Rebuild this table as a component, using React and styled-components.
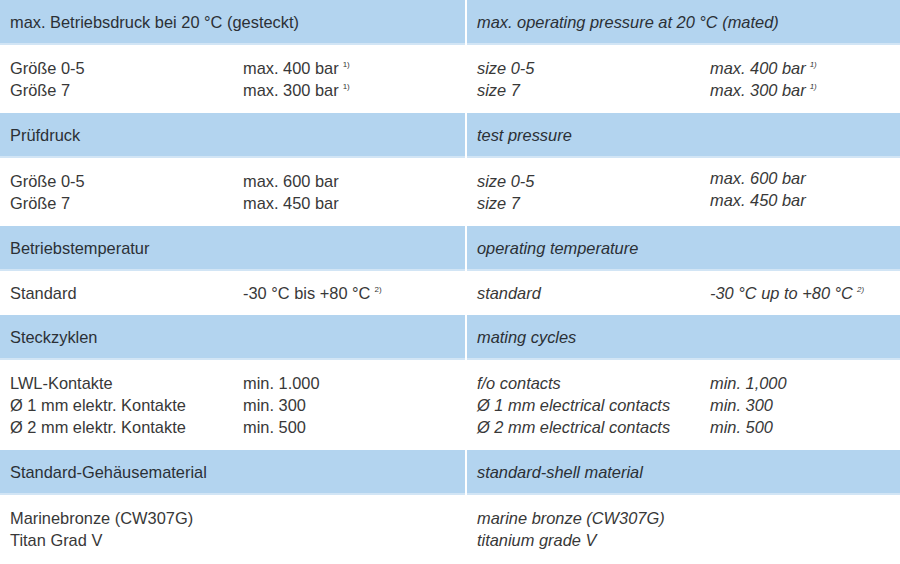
import React from "react";
import styled, { createGlobalStyle } from "styled-components";

const GlobalStyle = createGlobalStyle`
  html, body {
    margin: 0;
    padding: 0;
    background: #ffffff;
  }
  body {
    font-family: "Liberation Sans", Arial, sans-serif;
    font-size: 16.4px;
    color: #3a3a3a;
    overflow: hidden;
  }
`;

const Table = styled.div`
  display: flex;
  flex-direction: column;
  width: 900px;
`;

const Row = styled.div`
  display: grid;
  grid-template-columns: 465px 1fr;
  column-gap: 2px;
  background: #ffffff;
`;

const HeaderCell = styled.div`
  background: #b3d4ef;
  border-bottom: 2px solid #d2e5f5;
  height: 45px;
  box-sizing: border-box;
  padding: 0 10px;
  display: flex;
  align-items: center;
  line-height: 22px;
  color: #2b3036;
  font-style: ${({ $en }) => ($en ? "italic" : "normal")};
`;

const BodyCell = styled.div`
  padding: ${({ $single }) => ($single ? "11px" : "12px")} 10px;
  display: grid;
  grid-template-columns: 233px 1fr;
  line-height: 22px;
  color: #383838;
  font-style: ${({ $en }) => ($en ? "italic" : "normal")};
`;

const Column = styled.div`
  display: flex;
  flex-direction: column;
  transform: ${({ $raise }) => ($raise ? `translateY(-${$raise}px)` : "none")};
`;

const Line = styled.span`
  white-space: nowrap;
`;

const Note = styled.sup`
  font-size: 8px;
  line-height: 0;
  vertical-align: 7px;
  margin-left: 4px;
`;

const sections = [
  {
    de: "max. Betriebsdruck bei 20 °C (gesteckt)",
    en: "max. operating pressure at 20 °C (mated)",
    deRows: [["Größe 0-5", "max. 400 bar", "1)"], ["Größe 7", "max. 300 bar", "1)"]],
    enRows: [["size 0-5", "max. 400 bar", "1)"], ["size 7", "max. 300 bar", "1)"]],
  },
  {
    de: "Prüfdruck",
    en: "test pressure",
    deRows: [["Größe 0-5", "max. 600 bar"], ["Größe 7", "max. 450 bar"]],
    enRows: [["size 0-5", "max. 600 bar"], ["size 7", "max. 450 bar"]],
    enRaise: 3,
  },
  {
    de: "Betriebstemperatur",
    en: "operating temperature",
    deRows: [["Standard", "-30 °C bis +80 °C", "2)"]],
    enRows: [["standard", "-30 °C up to +80 °C", "2)"]],
  },
  {
    de: "Steckzyklen",
    en: "mating cycles",
    deRows: [
      ["LWL-Kontakte", "min. 1.000"],
      ["Ø 1 mm elektr. Kontakte", "min. 300"],
      ["Ø 2 mm elektr. Kontakte", "min. 500"],
    ],
    enRows: [
      ["f/o contacts", "min. 1,000"],
      ["Ø 1 mm electrical contacts", "min. 300"],
      ["Ø 2 mm electrical contacts", "min. 500"],
    ],
  },
  {
    de: "Standard-Gehäusematerial",
    en: "standard-shell material",
    deRows: [["Marinebronze (CW307G)"], ["Titan Grad V"]],
    enRows: [["marine bronze (CW307G)"], ["titanium grade V"]],
  },
];

const Body = ({ rows, en, raise }) => (
  <BodyCell $en={en} $single={rows.length === 1}>
    <Column>
      {rows.map((r, i) => (
        <Line key={i}>{r[0]}</Line>
      ))}
    </Column>
    <Column $raise={raise}>
      {rows.map((r, i) =>
        r[1] ? (
          <Line key={i}>
            {r[1]}
            {r[2] && <Note>{r[2]}</Note>}
          </Line>
        ) : null
      )}
    </Column>
  </BodyCell>
);

export default function App() {
  return (
    <>
      <GlobalStyle />
      <Table>
        {sections.map((s) => (
          <React.Fragment key={s.de}>
            <Row>
              <HeaderCell>{s.de}</HeaderCell>
              <HeaderCell $en>{s.en}</HeaderCell>
            </Row>
            <Row>
              <Body rows={s.deRows} />
              <Body rows={s.enRows} en raise={s.enRaise} />
            </Row>
          </React.Fragment>
        ))}
      </Table>
    </>
  );
}
